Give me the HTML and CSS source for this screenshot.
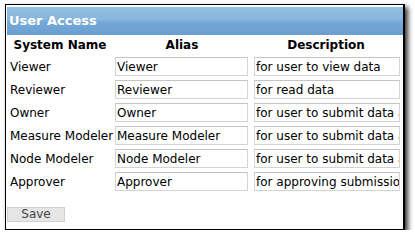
FILE: index.html
```html
<!DOCTYPE html>
<html lang="en">
  <head>
    <meta charset="utf-8">
    <link rel="stylesheet" href="styles.css">
  </head>
  <body>
  <div class="window">
    <div class="window_title">User Access</div>
    <table class="access">
      <colgroup>
        <col class="access__name">
        <col class="access__alias">
        <col class="access__desc">
      </colgroup>
      <tr class="access_head">
        <th>System Name</th>
        <th>Alias</th>
        <th>Description</th>
      </tr>
      <tr>
        <td>Viewer</td>
        <td><input class="field field__alias" type="text" value="Viewer"></td>
        <td><input class="field field__desc" type="text" value="for user to view data"></td>
      </tr>
      <tr>
        <td>Reviewer</td>
        <td><input class="field field__alias" type="text" value="Reviewer"></td>
        <td><input class="field field__desc" type="text" value="for read data"></td>
      </tr>
      <tr>
        <td>Owner</td>
        <td><input class="field field__alias" type="text" value="Owner"></td>
        <td><input class="field field__desc" type="text" value="for user to submit data and edit"></td>
      </tr>
      <tr>
        <td>Measure Modeler</td>
        <td><input class="field field__alias" type="text" value="Measure Modeler"></td>
        <td><input class="field field__desc" type="text" value="for user to submit data and model measures"></td>
      </tr>
      <tr>
        <td>Node Modeler</td>
        <td><input class="field field__alias" type="text" value="Node Modeler"></td>
        <td><input class="field field__desc" type="text" value="for user to submit data and model nodes"></td>
      </tr>
      <tr>
        <td>Approver</td>
        <td><input class="field field__alias" type="text" value="Approver"></td>
        <td><input class="field field__desc" type="text" value="for approving submissions"></td>
      </tr>
    </table>
    <div class="actions">
      <button class="btn" type="button">Save</button>
    </div>
  </div>
</body>
</html>
```

FILE: styles.css
```css
html, body {
  padding: 0px; margin: 0px;
  background: #fff;
  font-family: "DejaVu Sans", Verdana, sans-serif;
  font-size: 12px;
  color: #000;
}

.window {
  margin: 4px 0 0 5px;
  width: 396px; height: 222px;
  border: 1px solid #000;
  border-right-width: 2px;
  padding: 2px 0 0 1px;
  box-sizing: content-box;
  box-shadow: 3px 3px 5px rgba(0, 0, 0, 0.8);
  overflow: hidden;
}

.window_title {
  height: 28px;
  line-height: 28px;
  padding-left: 2px;
  color: #fff;
  font-weight: bold;
  font-size: 13px;
  background: linear-gradient(#94bfe3 0%, #86b5dd 45%, #74a8d6 55%, #6a9fd0 100%);
}

.access {
  table-layout: fixed;
  border-collapse: collapse;
  width: 394px;
  font-size: 12px;
}

.access__name { width: 106px; }
.access__alias { width: 138px; }
.access__desc { width: 150px; }

.access td, .access th {
  padding: 0px;
  height: 23px;
  vertical-align: middle;
  white-space: nowrap;
}

.access td:first-child {
  padding-left: 3px;
}

.access_head th {
  height: 20px;
  font-weight: bold;
  text-align: center;
}

.field {
  display: block;
  box-sizing: border-box;
  height: 19px;
  margin: 0px;
  padding: 0 0 0 1px;
  border: 1px solid #d4d4d4;
  border-top-color: #c4c4c4;
  font-family: "DejaVu Sans", Verdana, sans-serif;
  font-size: 12px;
  color: #000;
  background: #fff;
}

.field__alias {
  width: 133px;
  margin-left: 2px;
}

.field__desc {
  width: 146px;
  margin-left: 3px;
}

.actions {
  margin-top: 14px;
}

.btn {
  display: block;
  width: 58px; height: 15px;
  padding: 0px; margin: 0px;
  border: 1px solid #d0d0d0;
  background: #e6e6e6;
  color: #444;
  font-family: "DejaVu Sans", Verdana, sans-serif;
  font-size: 12px;
  line-height: 13px;
}
```
